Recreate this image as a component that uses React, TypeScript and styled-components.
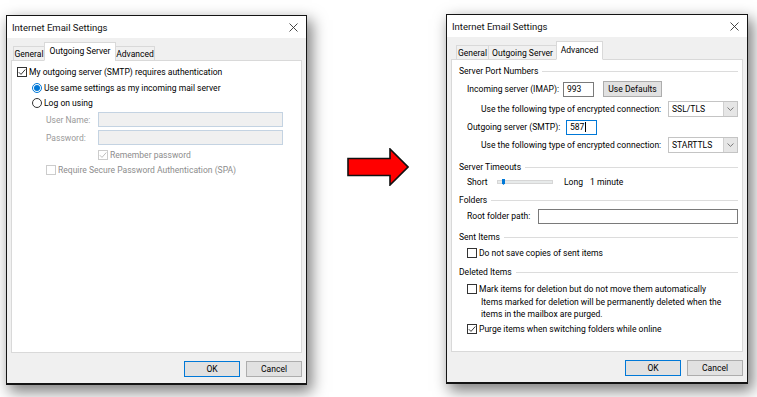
import React from 'react'
import styled, { createGlobalStyle } from 'styled-components'

const GlobalStyle = createGlobalStyle`
    html, body {
        margin: 0;
        padding: 0;
        background: #ffffff;
    }
    body {
        font-family: Roboto, 'Noto Sans', sans-serif;
        font-size: 8.55px;
        color: #000000;
    }
    * {
        box-sizing: border-box;
    }
`

const CheckMark = ({ color }: { color: string }) => (
    <svg width="8" height="8" viewBox="0 0 8 8">
        <path d="M0.8 4.2 L3 6.4 L7.3 1.5" fill="none" stroke={color} strokeWidth="0.9" />
    </svg>
)

const CloseIcon = () => (
    <svg width="9" height="9" viewBox="0 0 9 9">
        <path d="M0.5 0.5 L8.5 8.5 M8.5 0.5 L0.5 8.5" stroke="#333" strokeWidth="0.9" />
    </svg>
)

const Chevron = () => (
    <svg width="7" height="4" viewBox="0 0 7 4">
        <path d="M0.5 0.5 L3.5 3.4 L6.5 0.5" fill="none" stroke="#606060" strokeWidth="0.8" />
    </svg>
)

const Check = ({ checked, disabled }: { checked?: boolean; disabled?: boolean }) => (
    <CheckBox $disabled={disabled}>{checked && <CheckMark color={disabled ? '#b8b8b8' : '#222'} />}</CheckBox>
)

const Radio = ({ checked }: { checked?: boolean }) => (
    <RadioRing $checked={checked}>{checked && <RadioDot />}</RadioRing>
)

const GroupHeader = ({ children }: { children: React.ReactNode }) => (
    <Row $mt={4} $h={14} $ml={7} $mr={4}>
        <Label>{children}</Label>
        <HeaderRule />
    </Row>
)

type DialogProps = {
    tabs: { name: string; width: number }[]
    active: number
    tabLeft: number
    top: number
    width: number
    children: React.ReactNode
}

const EmailDialog = ({ tabs, active, tabLeft, top, width, children }: DialogProps) => (
    <Dialog $w={width} $top={top}>
        <TitleBar>
            <span>Internet Email Settings</span>
            <CloseIcon />
        </TitleBar>
        <DialogBody>
            <TabStrip $pl={tabLeft}>
                {tabs.map((t, i) => (
                    <Tab key={t.name} $w={t.width} $active={i === active}>
                        {t.name}
                    </Tab>
                ))}
            </TabStrip>
            <Panel>{children}</Panel>
            <Footer>
                <DialogButton $default>OK</DialogButton>
                <DialogButton>Cancel</DialogButton>
            </Footer>
        </DialogBody>
    </Dialog>
)

const App = () => {
    return (
        <Page>
            <GlobalStyle />
            <EmailDialog
                width={301}
                top={1}
                tabLeft={3}
                active={1}
                tabs={[
                    { name: 'General', width: 32 },
                    { name: 'Outgoing Server', width: 72 },
                    { name: 'Advanced', width: 40 },
                ]}
            >
                <Row $mt={4} $h={14} $ml={5}>
                    <Check checked />
                    <Label>My outgoing server (SMTP) requires authentication</Label>
                </Row>
                <Row $mt={2} $h={14} $ml={20}>
                    <Radio checked />
                    <Label>Use same settings as my incoming mail server</Label>
                </Row>
                <Row $mt={1} $h={14} $ml={20}>
                    <Radio />
                    <Label>Log on using</Label>
                </Row>
                <Row $mt={2} $h={15} $ml={34}>
                    <FieldLabel $w={52} $disabled>
                        User Name:
                    </FieldLabel>
                    <TextBox $w={185} $disabled />
                </Row>
                <Row $mt={3} $h={15} $ml={34}>
                    <FieldLabel $w={52} $disabled>
                        Password:
                    </FieldLabel>
                    <TextBox $w={185} $disabled />
                </Row>
                <Row $mt={3} $h={14} $ml={86}>
                    <Check checked disabled />
                    <Label $disabled>Remember password</Label>
                </Row>
                <Row $mt={1} $h={14} $ml={34}>
                    <Check disabled />
                    <Label $disabled>Require Secure Password Authentication (SPA)</Label>
                </Row>
            </EmailDialog>

            <ArrowSlot>
                <svg width="62" height="38" viewBox="0 0 62 38">
                    <polygon
                        points="1,10.5 43,10.5 43,1 61,19 43,37 43,27.5 1,27.5"
                        fill="#ff0000"
                        stroke="#111"
                        strokeWidth="1.6"
                        strokeLinejoin="miter"
                    />
                </svg>
            </ArrowSlot>

            <EmailDialog
                width={302}
                top={0}
                tabLeft={6}
                active={2}
                tabs={[
                    { name: 'General', width: 33 },
                    { name: 'Outgoing Server', width: 69 },
                    { name: 'Advanced', width: 47 },
                ]}
            >
                <GroupHeader>Server Port Numbers</GroupHeader>
                <Row $mt={3} $h={16} $ml={15}>
                    <FieldLabel $w={96}>Incoming server (IMAP):</FieldLabel>
                    <TextBox $w={31}>993</TextBox>
                    <SmallButton>Use Defaults</SmallButton>
                </Row>
                <Row $mt={4} $h={16} $ml={29} $mr={4}>
                    <Label>Use the following type of encrypted connection:</Label>
                    <Select>
                        <SelectText>SSL/TLS</SelectText>
                        <SelectButton>
                            <Chevron />
                        </SelectButton>
                    </Select>
                </Row>
                <Row $mt={2} $h={16} $ml={15}>
                    <FieldLabel $w={99}>Outgoing server (SMTP):</FieldLabel>
                    <TextBox $w={31} $focused>
                        587
                        <Caret />
                    </TextBox>
                </Row>
                <Row $mt={2} $h={16} $ml={29} $mr={4}>
                    <Label>Use the following type of encrypted connection:</Label>
                    <Select>
                        <SelectText>STARTTLS</SelectText>
                        <SelectButton>
                            <Chevron />
                        </SelectButton>
                    </Select>
                </Row>

                <Spacer $h={3} />
                <GroupHeader>Server Timeouts</GroupHeader>
                <Row $mt={1} $h={14} $ml={15}>
                    <FieldLabel $w={30}>Short</FieldLabel>
                    <SliderTrack>
                        <SliderThumb />
                    </SliderTrack>
                    <FieldLabel $w={26} $ml={11}>
                        Long
                    </FieldLabel>
                    <Label>1 minute</Label>
                </Row>

                <GroupHeader>Folders</GroupHeader>
                <Row $mt={1} $h={16} $ml={15} $mr={4}>
                    <FieldLabel $w={71}>Root folder path:</FieldLabel>
                    <TextBox $grow />
                </Row>

                <Spacer $h={2} />
                <GroupHeader>Sent Items</GroupHeader>
                <Row $mt={2} $h={14} $ml={15}>
                    <Check />
                    <Label>Do not save copies of sent items</Label>
                </Row>

                <Spacer $h={1} />
                <GroupHeader>Deleted Items</GroupHeader>
                <Row $mt={3} $h={14} $ml={15}>
                    <Check />
                    <Label>Mark items for deletion but do not move them automatically</Label>
                </Row>
                <Note>
                    Items marked for deletion will be permanently deleted when the
                    <br />
                    items in the mailbox are purged.
                </Note>
                <Row $mt={2} $h={14} $ml={15}>
                    <Check checked />
                    <Label>Purge items when switching folders while online</Label>
                </Row>
            </EmailDialog>
        </Page>
    )
}
export default App

const Page = styled.div`
    display: flex;
    align-items: flex-start;
    width: 757px;
    height: 397px;
    padding: 14px 0 0 6px;
    overflow: hidden;
`

const Dialog = styled.div<{ $w: number; $top: number }>`
    display: flex;
    flex-direction: column;
    flex-shrink: 0;
    width: ${(p) => p.$w}px;
    height: 370px;
    margin-top: ${(p) => p.$top}px;
    background: #f0f0f0;
    border: 1px solid #141414;
    border-bottom-width: 2px;
    box-shadow: 4px 6px 14px 1px rgba(0, 0, 0, 0.5);
`

const TitleBar = styled.div`
    display: flex;
    align-items: center;
    justify-content: space-between;
    height: 22px;
    padding: 0 8px 0 5px;
    background: #ffffff;
    font-size: 9.5px;
    color: #111;
`

const DialogBody = styled.div`
    display: flex;
    flex-direction: column;
    flex: 1;
    padding: 4px 4px 0 4px;
`

const TabStrip = styled.div<{ $pl: number }>`
    display: flex;
    align-items: flex-end;
    height: 19px;
    margin-bottom: -1px;
    padding-left: ${(p) => p.$pl}px;
    position: relative;
    z-index: 1;
`

const Tab = styled.div<{ $w: number; $active?: boolean }>`
    display: flex;
    align-items: center;
    justify-content: center;
    width: ${(p) => p.$w}px;
    height: ${(p) => (p.$active ? 19 : 15)}px;
    padding-bottom: ${(p) => (p.$active ? 2 : 0)}px;
    background: ${(p) => (p.$active ? '#ffffff' : '#f0f0f0')};
    border: 1px solid #d9d9d9;
    border-bottom-color: ${(p) => (p.$active ? '#ffffff' : '#d9d9d9')};
    margin-left: -1px;
    white-space: nowrap;
`

const Panel = styled.div`
    display: flex;
    flex-direction: column;
    flex: 1;
    background: #ffffff;
    border: 1px solid #d9d9d9;
`

const Footer = styled.div`
    display: flex;
    justify-content: flex-end;
    gap: 6px;
    height: 30px;
    padding-top: 8px;
`

const DialogButton = styled.div<{ $default?: boolean }>`
    display: flex;
    align-items: center;
    justify-content: center;
    width: 56px;
    height: 16px;
    background: #e1e1e1;
    border: 1px solid ${(p) => (p.$default ? '#0078d7' : '#adadad')};
`

const Row = styled.div<{ $mt: number; $h: number; $ml: number; $mr?: number }>`
    display: flex;
    align-items: center;
    height: ${(p) => p.$h}px;
    margin-top: ${(p) => p.$mt}px;
    margin-left: ${(p) => p.$ml}px;
    margin-right: ${(p) => p.$mr ?? 0}px;
    white-space: nowrap;
`

const Spacer = styled.div<{ $h: number }>`
    height: ${(p) => p.$h}px;
`

const Label = styled.span<{ $disabled?: boolean }>`
    color: ${(p) => (p.$disabled ? '#8d8d8d' : '#000')};
    white-space: nowrap;
`

const FieldLabel = styled.span<{ $w: number; $ml?: number; $disabled?: boolean }>`
    flex-shrink: 0;
    width: ${(p) => p.$w}px;
    margin-left: ${(p) => p.$ml ?? 0}px;
    color: ${(p) => (p.$disabled ? '#9a9a9a' : '#000')};
`

const HeaderRule = styled.div`
    flex: 1;
    height: 1px;
    margin-left: 4px;
    background: #dcdcdc;
`

const CheckBox = styled.span<{ $disabled?: boolean }>`
    display: flex;
    align-items: center;
    justify-content: center;
    flex-shrink: 0;
    width: 10px;
    height: 10px;
    margin-right: 2px;
    background: #ffffff;
    border: 1px solid ${(p) => (p.$disabled ? '#cccccc' : '#333333')};
`

const RadioRing = styled.span<{ $checked?: boolean }>`
    display: flex;
    align-items: center;
    justify-content: center;
    flex-shrink: 0;
    width: 10px;
    height: 10px;
    margin-right: 2px;
    border-radius: 50%;
    background: #ffffff;
    border: 1px solid ${(p) => (p.$checked ? '#0078d7' : '#333333')};
`

const RadioDot = styled.span`
    width: 6px;
    height: 6px;
    border-radius: 50%;
    background: #0078d7;
`

const TextBox = styled.div<{ $w?: number; $grow?: boolean; $disabled?: boolean; $focused?: boolean }>`
    display: flex;
    align-items: center;
    flex: ${(p) => (p.$grow ? 1 : 'none')};
    width: ${(p) => (p.$w ? `${p.$w}px` : 'auto')};
    height: 15px;
    padding-left: 3px;
    background: ${(p) => (p.$disabled ? '#f0f0f0' : '#ffffff')};
    border: 1px solid ${(p) => (p.$disabled ? '#c4d3e2' : p.$focused ? '#0078d7' : '#7a7a7a')};
`

const Caret = styled.span`
    width: 1px;
    height: 10px;
    margin-left: 0.5px;
    background: #000;
`

const SmallButton = styled.div`
    display: flex;
    align-items: center;
    justify-content: center;
    width: 59px;
    height: 16px;
    margin-left: 9px;
    background: #e1e1e1;
    border: 1px solid #adadad;
`

const Select = styled.div`
    display: flex;
    width: 70px;
    height: 16px;
    margin-left: auto;
    background: #ffffff;
    border: 1px solid #c4c4c4;
`

const SelectText = styled.div`
    flex: 1;
    display: flex;
    align-items: center;
    padding-left: 3px;
`

const SelectButton = styled.div`
    display: flex;
    align-items: center;
    justify-content: center;
    width: 14px;
    background: #e6e6e6;
    border-left: 1px solid #d0d0d0;
`

const SliderTrack = styled.div`
    position: relative;
    width: 56px;
    height: 4px;
    background: #e7eaea;
    border: 1px solid #d6d6d6;
`

const SliderThumb = styled.span`
    position: absolute;
    left: 4px;
    top: -2px;
    width: 3px;
    height: 6px;
    background: #0078d7;
    clip-path: polygon(0 0, 100% 0, 100% 70%, 50% 100%, 0 70%);
`

const Note = styled.div`
    margin: 1px 0 0 29px;
    line-height: 11.5px;
    white-space: nowrap;
`

const ArrowSlot = styled.div`
    flex-shrink: 0;
    width: 139px;
    padding: 134px 0 0 40px;
`
